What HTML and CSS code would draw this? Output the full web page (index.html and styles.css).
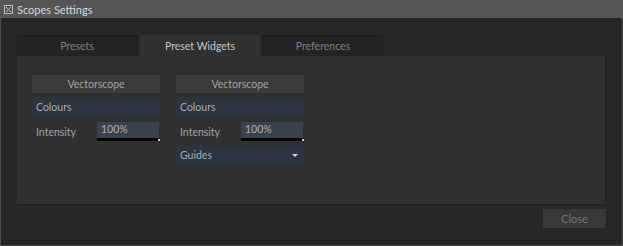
FILE: index.html
```html
<!DOCTYPE html>
<html lang="en">
<head>
    <meta charset="UTF-8">
    <title>Scopes Settings</title>
    <link rel="stylesheet" href="styles.css">
</head>
<body>
    <div class="window">
        <div class="titlebar">
            <span class="close-box">
                <svg width="9" height="9" viewBox="0 0 9 9">
                    <rect x="0.5" y="0.5" width="8" height="8" fill="none" stroke="#bdbdbd"/>
                    <path d="M2 2 L7 7 M7 2 L2 7" stroke="#bdbdbd" stroke-width="1"/>
                </svg>
            </span>
            <span class="title">Scopes Settings</span>
        </div>

        <div class="content">
            <div class="tabs">
                <div class="tab">Presets</div>
                <div class="tab active">Preset Widgets</div>
                <div class="tab">Preferences</div>
            </div>

            <div class="panel">
                <div class="widget">
                    <div class="widget-head">Vectorscope</div>
                    <div class="field">Colours</div>
                    <div class="row">
                        <span class="row-label">Intensity</span>
                        <span class="spin">100%</span>
                    </div>
                </div>
                <div class="widget">
                    <div class="widget-head">Vectorscope</div>
                    <div class="field">Colours</div>
                    <div class="row">
                        <span class="row-label">Intensity</span>
                        <span class="spin">100%</span>
                    </div>
                    <div class="field combo">
                        <span>Guides</span>
                        <span class="arrow"></span>
                    </div>
                </div>
            </div>

            <div class="footer">
                <button class="btn">Close</button>
            </div>
        </div>
    </div>
</body>
</html>
```

FILE: styles.css
```css
body {
    margin: 0;
    background: #262626;
    font-family: "Lato", "Liberation Sans", sans-serif;
    font-size: 10.5px;
}
.window {
    width: 623px;
    height: 246px;
    box-sizing: border-box;
    background: #262626;
    border: 1px solid #4e4e4e;
    border-top: none;
    display: flex;
    flex-direction: column;
}
.titlebar {
    height: 18px;
    background: #555555;
    display: flex;
    align-items: center;
    padding-left: 4px;
    margin: 0 -1px;
}
.close-box {
    display: flex;
    width: 9px;
    height: 9px;
    margin-right: 4px;
}
.title {
    color: #d6d6d6;
    font-size: 11px;
}
.content {
    padding: 17px 16px 0 16px;
}
.tabs {
    display: flex;
    gap: 3px;
}
.tab {
    width: 118px;
    height: 20px;
    line-height: 20px;
    text-align: center;
    background: #232323;
    border: 1px solid #1b1b1b;
    border-bottom: none;
    color: #808080;
}
.tab.active {
    background: #303030;
    border-color: #303030;
    color: #c4c4c4;
}
.panel {
    height: 149px;
    box-sizing: border-box;
    background: #303030;
    border-right: 1px solid #1e1e1e;
    border-bottom: 1px solid #1e1e1e;
    padding: 19px 15px;
    display: flex;
    gap: 16px;
    align-items: flex-start;
}
.widget {
    width: 128px;
    display: flex;
    flex-direction: column;
    gap: 5px;
}
.widget-head {
    height: 18px;
    line-height: 18px;
    text-align: center;
    background: #3b3b3b;
    color: #a2a2a2;
}
.field {
    height: 19px;
    line-height: 19px;
    padding-left: 4px;
    background: #2c3441;
    color: #a3aab4;
}
.row {
    height: 19px;
    display: flex;
    align-items: center;
    justify-content: space-between;
    padding-left: 4px;
}
.row-label {
    color: #a0a0a0;
}
.spin {
    position: relative;
    width: 58px;
    height: 16px;
    line-height: 14px;
    padding-left: 4px;
    background: #3a414e;
    border-bottom: 3px solid #050505;
    color: #aeb2b8;
    margin-right: 1px;
}
.spin::after {
    content: "";
    position: absolute;
    right: -1px;
    bottom: -3px;
    width: 2px;
    height: 2px;
    background: #c8c8c8;
}
.combo {
    display: flex;
    justify-content: space-between;
    align-items: center;
    padding-right: 6px;
}
.arrow {
    width: 0;
    height: 0;
    border-left: 3px solid transparent;
    border-right: 3px solid transparent;
    border-top: 3px solid #d8d8d8;
}
.footer {
    display: flex;
    justify-content: flex-end;
    padding-top: 4px;
}
.btn {
    width: 63px;
    height: 19px;
    background: #383838;
    border: none;
    color: #767676;
    font-family: inherit;
    font-size: 11px;
    padding: 0;
}
```
